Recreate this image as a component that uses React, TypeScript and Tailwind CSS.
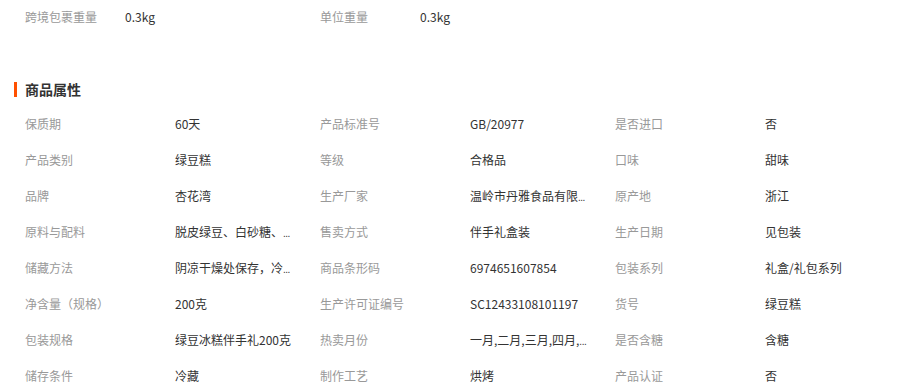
import React from "react";

type Row = [string, string, boolean?];

const rows: Row[] = [
  ["保质期", "60天"],
  ["产品标准号", "GB/20977"],
  ["是否进口", "否"],
  ["产品类别", "绿豆糕"],
  ["等级", "合格品"],
  ["口味", "甜味"],
  ["品牌", "杏花湾"],
  ["生产厂家", "温岭市丹雅食品有限", true],
  ["原产地", "浙江"],
  ["原料与配料", "脱皮绿豆、白砂糖、", true],
  ["售卖方式", "伴手礼盒装"],
  ["生产日期", "见包装"],
  ["储藏方法", "阴凉干燥处保存，冷", true],
  ["商品条形码", "6974651607854"],
  ["包装系列", "礼盒/礼包系列"],
  ["净含量（规格）", "200克"],
  ["生产许可证编号", "SC12433108101197"],
  ["货号", "绿豆糕"],
  ["包装规格", "绿豆冰糕伴手礼200克"],
  ["热卖月份", "一月,二月,三月,四月,", true],
  ["是否含糖", "含糖"],
  ["储存条件", "冷藏"],
  ["制作工艺", "烘烤"],
  ["产品认证", "否"],
];

export default function App() {
  return (
    <div className="w-[911px] h-[389px] overflow-hidden bg-white font-['Noto_Sans_CJK_SC','Liberation_Sans',sans-serif] text-[12px]">
      <div className="flex h-[34px] items-center pl-[25px]">
        <div className="flex w-[295px] items-center">
          <span className="w-[100px] text-[#999]">跨境包裹重量</span>
          <span className="text-[#333]">0.3kg</span>
        </div>
        <div className="flex items-center">
          <span className="w-[100px] text-[#999]">单位重量</span>
          <span className="text-[#333]">0.3kg</span>
        </div>
      </div>
      <div className="mt-[44px] flex h-[22px] items-center pl-[14px]">
        <span className="h-[15px] w-[3px] bg-[#ff5000]" />
        <span className="ml-[8px] text-[14px] font-bold text-[#333]">商品属性</span>
      </div>
      <div className="mt-[6px] grid grid-cols-[295px_295px_295px] pl-[25px]">
        {rows.map(([k, v, cut], i) => (
          <div key={i} className="flex h-[36px] items-center">
            <span className="w-[150px] shrink-0 whitespace-nowrap text-[#999]">{k}</span>
            <span className="w-[130px] whitespace-nowrap text-[#333]">
              {v}
              {cut ? (
                <span className="font-['Liberation_Sans',sans-serif] text-[10px] tracking-[-0.5px]">...</span>
              ) : null}
            </span>
          </div>
        ))}
      </div>
    </div>
  );
}
